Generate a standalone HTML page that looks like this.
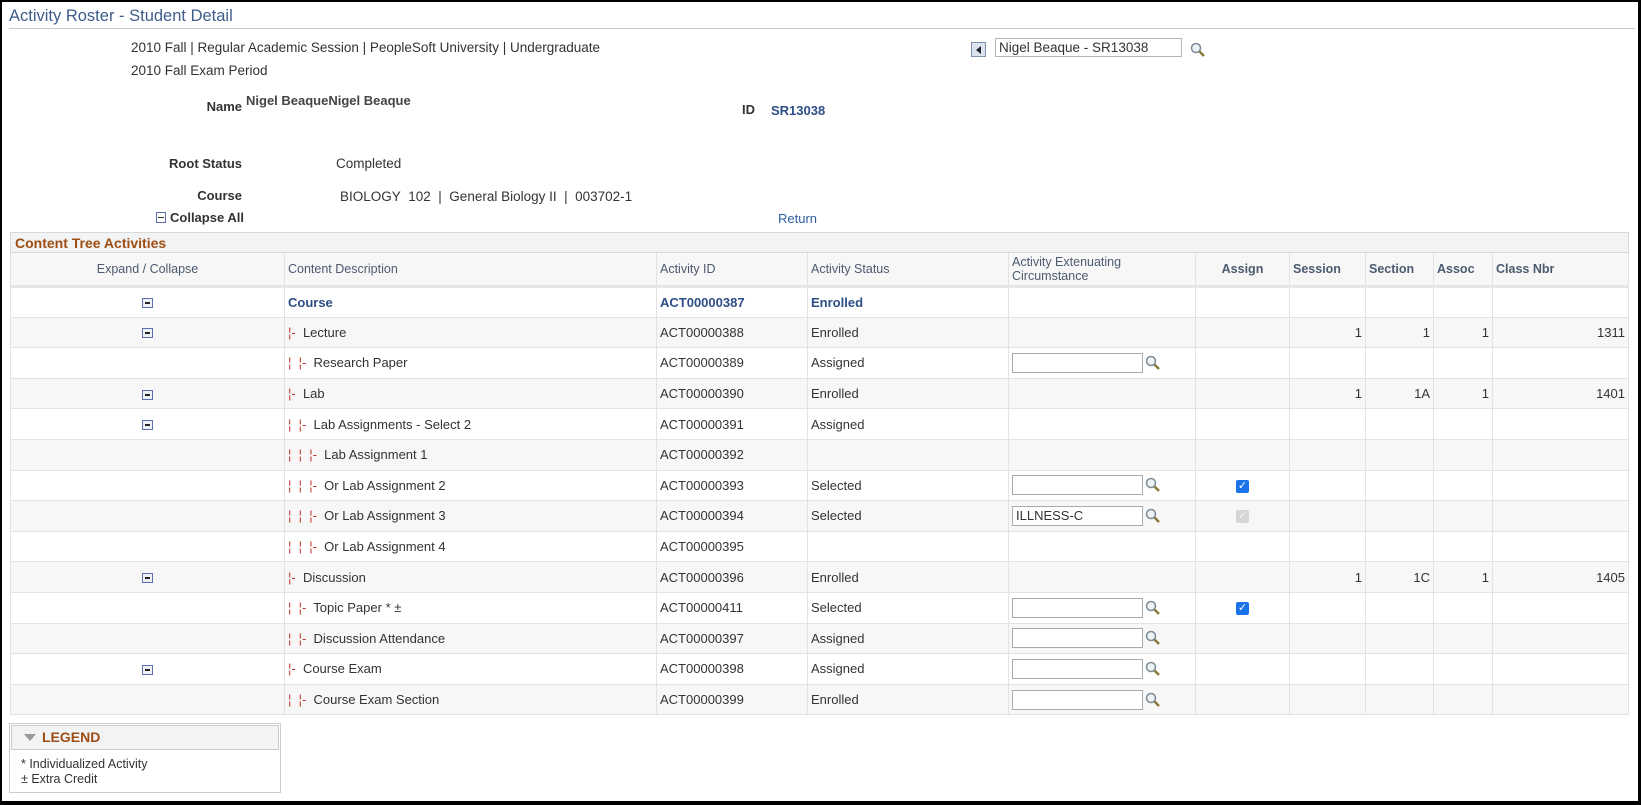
<!DOCTYPE html>
<html><head><meta charset="utf-8"><style>
*{box-sizing:border-box;margin:0;padding:0}
body{width:1641px;height:805px;background:#000;font-family:"Liberation Sans",Arial,sans-serif;color:#333;position:relative;overflow:hidden}
#pg{position:absolute;left:2px;top:2px;width:1636px;height:799px;background:#fff}
.a{position:absolute;white-space:nowrap;font-size:13px}
.lbl{font-weight:bold;color:#333;text-align:right}
.blue{color:#2d4e86}
table{position:absolute;left:8px;top:230px;border-collapse:collapse;table-layout:fixed;font-size:13px}
td,th{border:1px solid #e3e3e3;padding:0 3px;white-space:nowrap;overflow:hidden}
th{background:#f7f7f7;color:#4c5a70;font-weight:bold;text-align:left;height:34px;font-size:12.5px;line-height:14px;border-bottom:3px solid #e6e6e6}
td{height:30.6px}
tr.g td{background:#f7f7f7}
.band td{background:#f1f3f4;color:#9f4d12;font-weight:bold;font-size:14px;height:20px;border-color:#d8d8d8;padding-left:4px}
.c{text-align:center}.r{text-align:right}
.pm{display:inline-block;width:11px;height:10px;border:1px solid #5c6fb0;background:#eef0f8;position:relative;vertical-align:middle}
.pm:after{content:"";position:absolute;left:2px;top:3px;width:5px;height:2px;background:#222}
.t{color:#c0392b;letter-spacing:0}
.inp{display:inline-block;width:131px;height:20px;border:1px solid #aaa;vertical-align:middle;font-size:13px;line-height:18px;padding-left:3px;background:#fff}
.mg{display:inline-block;vertical-align:middle;margin-left:2px}
.cb{display:inline-block;width:13px;height:13px;border-radius:2px;background:#1a73e8;color:#fff;font-size:11px;line-height:13px;text-align:center;vertical-align:middle}
.cb.d{background:#d6d6d6;color:#f2f2f2}
.bold{font-weight:bold;color:#2d4e86}
</style></head><body><div id="pg">
<div class="a" style="left:7px;top:5px;font-size:16.5px;color:#3e5d8a">Activity Roster - Student Detail</div>
<div style="position:absolute;left:7px;top:26px;width:1626px;height:1px;background:#c8c8c8"></div>
<div class="a" style="left:129px;top:38px;font-size:13.5px">2010 Fall | Regular Academic Session | PeopleSoft University | Undergraduate</div>
<div class="a" style="left:129px;top:61px;font-size:13.5px">2010 Fall Exam Period</div>
<div class="a lbl" style="left:180px;top:97px;width:60px">Name</div>
<div class="a" style="left:244px;top:91px;font-weight:bold;color:#444">Nigel BeaqueNigel Beaque</div>
<div class="a lbl" style="left:740px;top:100px">ID</div>
<div class="a bold" style="left:769px;top:101px">SR13038</div>
<div style="position:absolute;left:969px;top:40px;width:15px;height:15px;border:1px solid #8090b0;background:#dde3ee"><div style="position:absolute;left:4px;top:3px;border-right:5px solid #223;border-top:4px solid transparent;border-bottom:4px solid transparent"></div></div>
<div class="a" style="left:993px;top:36px;width:187px;height:19px;border:1px solid #b5b5b5;line-height:17px;padding-left:3px;font-size:13.5px">Nigel Beaque - SR13038</div>
<svg class="a" style="left:1188px;top:40px" width="16" height="16"><circle cx="6" cy="6" r="4.5" fill="#eef3f6" stroke="#7c8a96" stroke-width="1.5"/><line x1="9.5" y1="9.5" x2="14" y2="14" stroke="#8a7a3a" stroke-width="2.5"/></svg>
<div class="a lbl" style="left:140px;top:154px;width:100px">Root Status</div>
<div class="a" style="left:334px;top:154px;font-size:13.5px">Completed</div>
<div class="a lbl" style="left:140px;top:186px;width:100px">Course</div>
<div class="a" style="left:338px;top:187px;font-size:13.5px">BIOLOGY&nbsp; 102&nbsp; |&nbsp; General Biology II&nbsp; |&nbsp; 003702-1</div>
<div style="position:absolute;left:154px;top:210px;width:10px;height:11px;border:1px solid #5c6fb0;background:#fff"><div style="position:absolute;left:1px;top:4px;width:6px;height:1px;background:#333"></div></div>
<div class="a" style="left:168px;top:208px;font-weight:bold">Collapse All</div>
<div class="a" style="left:776px;top:209px;color:#2d5fa0">Return</div>
<table>
<colgroup><col style="width:274px"><col style="width:372px"><col style="width:151px"><col style="width:201px"><col style="width:187px"><col style="width:94px"><col style="width:76px"><col style="width:68px"><col style="width:59px"><col style="width:136px"></colgroup>
<tr class="band"><td colspan="10">Content Tree Activities</td></tr>
<tr><th class="c" style="font-weight:normal">Expand / Collapse</th><th style="font-weight:normal">Content Description</th><th style="font-weight:normal">Activity ID</th><th style="font-weight:normal">Activity Status</th><th style="font-weight:normal">Activity Extenuating<br>Circumstance</th><th class="c">Assign</th><th>Session</th><th>Section</th><th>Assoc</th><th>Class Nbr</th></tr>
<tr><td class="c"><span class="pm"></span></td><td class="bold">Course</td><td class="bold">ACT00000387</td><td class="bold">Enrolled</td><td></td><td></td><td></td><td></td><td></td><td></td></tr>
<tr class="g"><td class="c"><span class="pm"></span></td><td><span class="t">¦-</span>&nbsp; Lecture</td><td>ACT00000388</td><td>Enrolled</td><td></td><td></td><td class="r">1</td><td class="r">1</td><td class="r">1</td><td class="r">1311</td></tr>
<tr><td></td><td><span class="t">¦&nbsp; ¦-</span>&nbsp; Research Paper</td><td>ACT00000389</td><td>Assigned</td><td><span class="inp"></span><svg class="mg" width="16" height="16"><circle cx="6" cy="6" r="4.5" fill="#eef3f6" stroke="#7c8a96" stroke-width="1.5"/><line x1="9.5" y1="9.5" x2="14" y2="14" stroke="#8a7a3a" stroke-width="2.5"/></svg></td><td></td><td></td><td></td><td></td><td></td></tr>
<tr class="g"><td class="c"><span class="pm"></span></td><td><span class="t">¦-</span>&nbsp; Lab</td><td>ACT00000390</td><td>Enrolled</td><td></td><td></td><td class="r">1</td><td class="r">1A</td><td class="r">1</td><td class="r">1401</td></tr>
<tr><td class="c"><span class="pm"></span></td><td><span class="t">¦&nbsp; ¦-</span>&nbsp; Lab Assignments - Select 2</td><td>ACT00000391</td><td>Assigned</td><td></td><td></td><td></td><td></td><td></td><td></td></tr>
<tr class="g"><td></td><td><span class="t">¦&nbsp; ¦&nbsp; ¦-</span>&nbsp; Lab Assignment 1</td><td>ACT00000392</td><td></td><td></td><td></td><td></td><td></td><td></td><td></td></tr>
<tr><td></td><td><span class="t">¦&nbsp; ¦&nbsp; ¦-</span>&nbsp; Or Lab Assignment 2</td><td>ACT00000393</td><td>Selected</td><td><span class="inp"></span><svg class="mg" width="16" height="16"><circle cx="6" cy="6" r="4.5" fill="#eef3f6" stroke="#7c8a96" stroke-width="1.5"/><line x1="9.5" y1="9.5" x2="14" y2="14" stroke="#8a7a3a" stroke-width="2.5"/></svg></td><td class="c"><span class="cb">✓</span></td><td></td><td></td><td></td><td></td></tr>
<tr class="g"><td></td><td><span class="t">¦&nbsp; ¦&nbsp; ¦-</span>&nbsp; Or Lab Assignment 3</td><td>ACT00000394</td><td>Selected</td><td><span class="inp">ILLNESS-C</span><svg class="mg" width="16" height="16"><circle cx="6" cy="6" r="4.5" fill="#eef3f6" stroke="#7c8a96" stroke-width="1.5"/><line x1="9.5" y1="9.5" x2="14" y2="14" stroke="#8a7a3a" stroke-width="2.5"/></svg></td><td class="c"><span class="cb d">✓</span></td><td></td><td></td><td></td><td></td></tr>
<tr><td></td><td><span class="t">¦&nbsp; ¦&nbsp; ¦-</span>&nbsp; Or Lab Assignment 4</td><td>ACT00000395</td><td></td><td></td><td></td><td></td><td></td><td></td><td></td></tr>
<tr class="g"><td class="c"><span class="pm"></span></td><td><span class="t">¦-</span>&nbsp; Discussion</td><td>ACT00000396</td><td>Enrolled</td><td></td><td></td><td class="r">1</td><td class="r">1C</td><td class="r">1</td><td class="r">1405</td></tr>
<tr><td></td><td><span class="t">¦&nbsp; ¦-</span>&nbsp; Topic Paper * ±</td><td>ACT00000411</td><td>Selected</td><td><span class="inp"></span><svg class="mg" width="16" height="16"><circle cx="6" cy="6" r="4.5" fill="#eef3f6" stroke="#7c8a96" stroke-width="1.5"/><line x1="9.5" y1="9.5" x2="14" y2="14" stroke="#8a7a3a" stroke-width="2.5"/></svg></td><td class="c"><span class="cb">✓</span></td><td></td><td></td><td></td><td></td></tr>
<tr class="g"><td></td><td><span class="t">¦&nbsp; ¦-</span>&nbsp; Discussion Attendance</td><td>ACT00000397</td><td>Assigned</td><td><span class="inp"></span><svg class="mg" width="16" height="16"><circle cx="6" cy="6" r="4.5" fill="#eef3f6" stroke="#7c8a96" stroke-width="1.5"/><line x1="9.5" y1="9.5" x2="14" y2="14" stroke="#8a7a3a" stroke-width="2.5"/></svg></td><td></td><td></td><td></td><td></td><td></td></tr>
<tr><td class="c"><span class="pm"></span></td><td><span class="t">¦-</span>&nbsp; Course Exam</td><td>ACT00000398</td><td>Assigned</td><td><span class="inp"></span><svg class="mg" width="16" height="16"><circle cx="6" cy="6" r="4.5" fill="#eef3f6" stroke="#7c8a96" stroke-width="1.5"/><line x1="9.5" y1="9.5" x2="14" y2="14" stroke="#8a7a3a" stroke-width="2.5"/></svg></td><td></td><td></td><td></td><td></td><td></td></tr>
<tr class="g"><td></td><td><span class="t">¦&nbsp; ¦-</span>&nbsp; Course Exam Section</td><td>ACT00000399</td><td>Enrolled</td><td><span class="inp"></span><svg class="mg" width="16" height="16"><circle cx="6" cy="6" r="4.5" fill="#eef3f6" stroke="#7c8a96" stroke-width="1.5"/><line x1="9.5" y1="9.5" x2="14" y2="14" stroke="#8a7a3a" stroke-width="2.5"/></svg></td><td></td><td></td><td></td><td></td><td></td></tr>
</table>
<div style="position:absolute;left:7px;top:721px;width:272px;height:70px;border:1px solid #ccc">
<div style="height:25px;background:#f1f3f4;border:1px solid #ccc;margin:1px;position:relative">
<div style="position:absolute;left:12px;top:8px;border-top:7px solid #999;border-left:6px solid transparent;border-right:6px solid transparent"></div>
<div style="position:absolute;left:30px;top:3px;font-weight:bold;color:#9f4d12;font-size:14px">LEGEND</div></div>
<div style="font-size:12.5px;padding-left:11px;padding-top:6px;line-height:15px">* Individualized Activity<br>± Extra Credit</div>
</div>
</div></body></html>
